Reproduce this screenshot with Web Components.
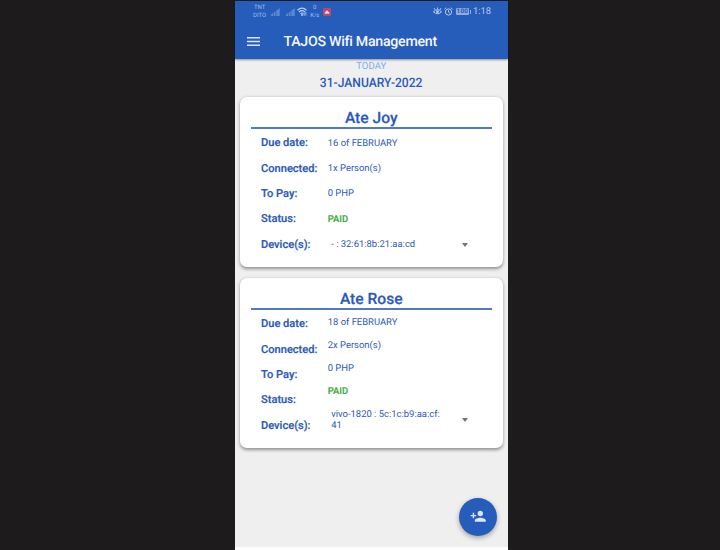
<!DOCTYPE html>
<html lang="en">
<head>
<meta charset="utf-8">
<title>TAJOS Wifi Management</title>
<style>
  body { margin: 0; background: #1d1b1c; font-family: Roboto, "Liberation Sans", sans-serif; color: #2b5ab8; text-rendering: geometricPrecision; }
</style>
</head>
<body>
<wifi-app>
  <phone-status slot="status"></phone-status>
  <app-bar slot="bar">TAJOS Wifi Management</app-bar>
  <today-banner><span slot="caption">TODAY</span>31-JANUARY-2022</today-banner>
  <customer-card name="Ate Joy" due="16 of FEBRUARY" connected="1x Person(s)" pay="0 PHP" status="PAID" device="- : 32:61:8b:21:aa:cd"></customer-card>
  <customer-card name="Ate Rose" due="18 of FEBRUARY" connected="2x Person(s)" pay="0 PHP" status="PAID" device="vivo-1820 : 5c:1c:b9:aa:cf:|41" style="--row:23px;--last:34px"></customer-card>
  <add-button slot="fab"></add-button>
</wifi-app>
<script>
const define = (name, html, setup) => customElements.define(name, class extends HTMLElement {
  connectedCallback() {
    if (this.shadowRoot) return;
    const root = this.attachShadow({ mode: 'open' });
    const t = document.createElement('template');
    t.innerHTML = html;
    root.append(t.content.cloneNode(true));
    if (setup) setup(this, root);
  }
});

define('wifi-app', `
<style>
  :host { display: flex; justify-content: center; height: 550px; padding: 1px 0 0 23px; box-sizing: border-box; overflow: hidden; }
  .phone { width: 273px; height: 549px; display: flex; flex-direction: column; position: relative; background: #fdfdfd; }
  header { background: #265cba; height: 58px; flex: none; box-shadow: 0 1px 2px #0006; z-index: 1; }
  main { background: #efeff0; height: 488px; flex: none; display: flex; flex-direction: column; padding: 0 5.5px 0 5px; box-sizing: border-box; overflow: hidden; }
  header, main { width: 273px; }
  .fab { position: absolute; right: 11px; bottom: 14.5px; }
</style>
<div class="phone"><header><slot name="status"></slot><slot name="bar"></slot></header>
<main><slot></slot></main><div class="fab"><slot name="fab"></slot></div></div>`);

define('phone-status', `
<style>
  :host { display: flex; align-items: center; height: 21px; padding: 0 17px 0 18px; color: #a5bfee; font-size: 6px; }
  .two { line-height: 8px; text-align: center; }
  svg { display: block; fill: #8fafe6; }
  .time { font-size: 9.4px; margin-left: 2px; color: #b4cbf2; }
  .gap { flex: 1; }
  .bat { width: 13px; height: 7px; line-height: 7.5px; margin-left: 3px; background: #91abdc; color: #2b57a8; text-align: center; font-weight: 700; font-size: 6.4px; border-radius: 1px; letter-spacing: .2px; }
  .nub { width: 1px; height: 4px; background: #91abdc; margin-left: 1px; }
</style>
<div class="two">TNT<br>DITO</div>
<svg width="9" height="8" viewBox="0 0 9 8" style="margin-left:5px"><path d="M0 8V6.5L2 5V8zM2.6 8V4.6L4.6 3.2V8zM5.2 8V2.8L8.8 0V8z" opacity=".5"/></svg>
<svg width="9" height="8" viewBox="0 0 9 8" style="margin-left:6px"><path d="M0 8V6.5L2 5V8zM2.6 8V4.6L4.6 3.2V8zM5.2 8V2.8L8.8 0V8z" opacity=".5"/></svg>
<svg width="10" height="9" viewBox="0 0 10 9" style="margin-left:2px"><path d="M.5 3.2Q5-.9 9.5 3.2M2 5Q5 2.4 8 5M3.5 6.6Q5 5.4 6.5 6.6" fill="none" stroke="#bdd1f5" stroke-width="1.2"/><circle cx="5" cy="8" r=".9" fill="#bdd1f5"/><path d="M7.2 8.8V5.5M8.9 5V8.5" stroke="#bdd1f5" stroke-width=".8"/></svg>
<div class="two" style="margin-left:3px">0<br>K/s</div>
<svg width="8" height="8" viewBox="0 0 8 8" style="margin-left:4px"><rect width="8" height="8" rx="1" fill="#b94768"/><path d="M1.6 5.7V4.8L4 2.2 6.4 4.8V5.7z" fill="#f0d4df"/></svg>
<div class="gap"></div>
<svg width="9" height="9" viewBox="0 0 9 9"><path d="M.4 4.8Q4.5.8 8.6 4.8 4.5 8.8.4 4.8zM4.5 2.6V.5M2.2 3L1.1 1.2M6.8 3L7.9 1.2" fill="none" stroke="#b4cbf2"/><circle cx="4.5" cy="4.8" r="1.4" fill="#b4cbf2"/></svg>
<svg width="9" height="9" viewBox="0 0 9 9" style="margin-left:2px"><circle cx="4.5" cy="5" r="3.1" fill="none" stroke="#b4cbf2" stroke-width="1"/><path d="M4.5 3.2V5.2L5.8 6M.5 2.1L2.2.7M8.5 2.1L6.8.7" fill="none" stroke="#b4cbf2" stroke-width="1"/></svg>
<div class="bat">100</div><div class="nub"></div><div class="time">1:18</div>`);

define('app-bar', `
<style>
  :host { display: flex; align-items: center; height: 37px; padding: 1px 0 0 12px; box-sizing: border-box; gap: 23.5px; color: #f4f7fd; font-size: 14.2px; letter-spacing: -.28px; font-weight: 500; white-space: nowrap; }
  svg { display: block; flex: none; }
  span { padding-top: 1.5px; }
</style>
<svg width="13" height="9" viewBox="0 0 13 9"><path d="M0 .8H13M0 4.5H13M0 8.2H13" stroke="#dce7fa" stroke-width="1.6"/></svg><span><slot></slot></span>`);

define('today-banner', `
<style>
  :host { display: flex; flex-direction: column; align-items: center; height: 37.5px; flex: none; }
  .cap { font-size: 9.6px; line-height: 16px; color: #83a9ee; }
  .date { font-size: 13px; line-height: 17px; font-weight: 500; transform: scaleX(.93); }
</style>
<div class="cap"><slot name="caption"></slot></div><div class="date"><slot></slot></div>`);

define('customer-card', `
<style>
  :host { display: block; height: 170px; flex: none; margin-bottom: 11px; padding: 11px 10.5px 0; box-sizing: border-box; background: #fff; border-radius: 7px; box-shadow: 0 1.5px 3.5px #0006; --r: var(--row, 25.4px); }
  h2 { margin: 0; height: 21.5px; line-height: 21px; box-sizing: border-box; border-bottom: 2px solid #5279c6; text-align: center; font-size: 15.6px; font-weight: 500; -webkit-text-stroke: .2px; }
  .cols { display: grid; grid-template-columns: 66.7px 1fr; padding-left: 10.5px; padding-top: 1.1px; }
  .labels { display: grid; grid-auto-rows: 25.4px; align-items: center; align-content: start; font-size: 11.1px; font-weight: 500; -webkit-text-stroke: .2px; white-space: nowrap; }
  .vals { display: grid; grid-template-rows: repeat(4, var(--r)) var(--last, 25.4px); align-items: center; align-content: start; font-size: 9.45px; white-space: nowrap; padding-top: .3px; }
  .paid { color: #38aa3c; font-weight: 500; -webkit-text-stroke: .15px; }
  .select { display: flex; align-items: center; padding-left: 3.5px; line-height: 11px; }
  .select span { width: 131px; }
  i { width: 0; border: 3.8px solid transparent; border-top: 4px solid #727272; border-bottom: 0; }
</style>
<h2></h2>
<div class="cols">
  <div class="labels"><span>Due date:</span><span>Connected:</span><span>To Pay:</span><span>Status:</span><span>Device(s):</span></div>
  <div class="vals"><span class="due"></span><span class="con"></span><span class="pay"></span><span class="paid"></span><div class="select"><span></span><i></i></div></div>
</div>`, (el, root) => {
  const put = (sel, attr) => root.querySelector(sel).textContent = el.getAttribute(attr);
  put('h2', 'name'); put('.due', 'due'); put('.con', 'connected'); put('.pay', 'pay'); put('.paid', 'status');
  const s = root.querySelector('.select span');
  el.getAttribute('device').split('|').forEach((line, i) => { if (i) s.append(document.createElement('br')); s.append(line); });
});

define('add-button', `
<style>
  :host { display: flex; align-items: center; justify-content: center; width: 38px; height: 38px; border-radius: 50%; background: #265cba; box-shadow: 0 2px 5px #0005; }
</style>
<svg width="16.500" height="16.500" viewBox="0 0 24 24" fill="#dbe6fa"><path d="M15 12c2.21 0 4-1.79 4-4s-1.790-4-4-4-4 1.790-4 4 1.790 4 4 4zm-9-2V7H4v3H1v2h3v3h2v-3h3v-2H6zm9 4c-2.670 0-8 1.340-8 4v2h16v-2c0-2.660-5.330-4-8-4z"/></svg>`);
</script>
</body>
</html>
